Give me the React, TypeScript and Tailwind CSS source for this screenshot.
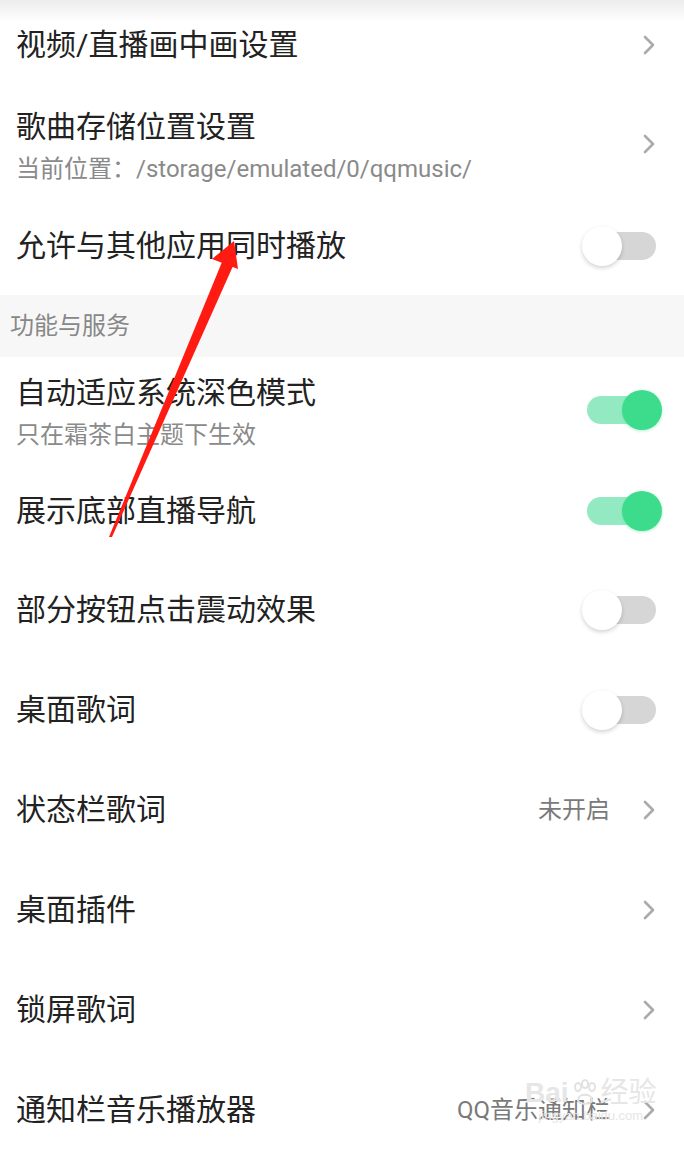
import type { ReactNode } from 'react'

const FONT = 'Roboto, "Noto Sans CJK SC", sans-serif'

function Chevron() {
  return (
    <svg width="14" height="22" viewBox="0 0 14 22" className="shrink-0">
      <path d="M3 3 L11 11 L3 19" fill="none" stroke="#ababab" strokeWidth="2.6" strokeLinecap="round" strokeLinejoin="round" />
    </svg>
  )
}

function Toggle({ on }: { on: boolean }) {
  if (on) {
    return (
      <div className="relative w-[75px] h-[40px] shrink-0">
        <div className="absolute left-0 top-[6px] w-[68px] h-[28px] rounded-full bg-[#93eac2]" />
        <div className="absolute right-0 top-0 w-[40px] h-[40px] rounded-full bg-[#3ddc8d] shadow-[0_1px_3px_rgba(61,220,141,0.4)]" />
      </div>
    )
  }
  return (
    <div className="relative w-[75px] h-[40px] shrink-0">
      <div className="absolute left-[4px] top-[6px] w-[70px] h-[28px] rounded-full bg-[#d6d6d6]" />
      <div className="absolute left-0 top-0 w-[40px] h-[40px] rounded-full bg-white shadow-[0_2px_4px_rgba(0,0,0,0.18)]" />
    </div>
  )
}

function Row({
  h,
  title,
  sub,
  right,
}: {
  h: string
  title: string
  sub?: string
  right: ReactNode
}) {
  return (
    <div className={`flex items-center justify-between pl-[16px] ${h}`}>
      <div className={`flex flex-col ${sub ? 'pt-[6px]' : ''}`}>
        <div className="text-[30px] leading-[36px] text-[#222]">{title}</div>
        {sub && <div className="text-[24px] leading-[32px] text-[#8a8a8a] mt-[8px]">{sub}</div>}
      </div>
      {right}
    </div>
  )
}

function Arrow({ text }: { text?: string }) {
  return (
    <div className="flex items-center gap-[32px] pr-[28px]">
      {text && <span className="text-[24px] text-[#7a7a7a]">{text}</span>}
      <Chevron />
    </div>
  )
}

function Sw({ on }: { on: boolean }) {
  return (
    <div className={on ? 'pr-[22px]' : 'pr-[27px]'}>
      <Toggle on={on} />
    </div>
  )
}

export default function App() {
  return (
    <div className="relative w-[684px] h-[1151px] overflow-hidden bg-white" style={{ fontFamily: FONT }}>
      <div className="absolute top-0 left-0 right-0 h-[22px] bg-gradient-to-b from-[#ececec] to-white z-10" />

      <Row h="h-[90px]" title="视频/直播画中画设置" right={<Arrow />} />
      <Row
        h="h-[107px]"
        title="歌曲存储位置设置"
        sub="当前位置：/storage/emulated/0/qqmusic/"
        right={<Arrow />}
      />
      <Row h="h-[98px]" title="允许与其他应用同时播放" right={<Sw on={false} />} />

      <div className="h-[62px] bg-[#f7f7f7] flex items-center pl-[10px] text-[24px] text-[#888]">
        功能与服务
      </div>

      <Row h="h-[105px]" title="自动适应系统深色模式" sub="只在霜茶白主题下生效" right={<Sw on />} />
      <Row h="h-[98px]" title="展示底部直播导航" right={<Sw on />} />
      <Row h="h-[100px]" title="部分按钮点击震动效果" right={<Sw on={false} />} />
      <Row h="h-[100px]" title="桌面歌词" right={<Sw on={false} />} />
      <Row h="h-[100px]" title="状态栏歌词" right={<Arrow text="未开启" />} />
      <Row h="h-[100px]" title="桌面插件" right={<Arrow />} />
      <Row h="h-[100px]" title="锁屏歌词" right={<Arrow />} />
      <Row h="h-[100px]" title="通知栏音乐播放器" right={<Arrow text="QQ音乐通知栏" />} />

      {/* watermark */}
      <div className="absolute left-[525px] top-[1078px] flex flex-col items-center text-[#e6e6e6] pointer-events-none">
        <div className="flex items-center text-[28px] leading-[30px]" style={{ fontFamily: '"Liberation Sans", "Noto Sans CJK SC", sans-serif' }}>
          <span className="font-bold">Bai</span>
          <svg width="30" height="30" viewBox="0 0 30 30" className="mx-[1px]">
            <g fill="none" stroke="#e2e2e2" strokeWidth="2">
              <ellipse cx="8" cy="9" rx="3" ry="4" />
              <ellipse cx="15" cy="6" rx="3" ry="4" />
              <ellipse cx="22" cy="9" rx="3" ry="4" />
              <path d="M8 22 C8 15 22 15 22 22 C22 27 8 27 8 22 Z" />
            </g>
          </svg>
          <span>经验</span>
        </div>
        <div className="text-[13px] leading-[16px]" style={{ fontFamily: '"Liberation Sans", sans-serif' }}>jingyan.baidu.com</div>
      </div>

      {/* annotation arrow */}
      <svg className="absolute inset-0 pointer-events-none" width="684" height="1151" viewBox="0 0 684 1151">
        <polygon points="109,537 222,262 233,266 112,537" fill="#ff1a12" />
        <polygon points="234,241 212,259 238,269" fill="#ff1a12" />
      </svg>
    </div>
  )
}
